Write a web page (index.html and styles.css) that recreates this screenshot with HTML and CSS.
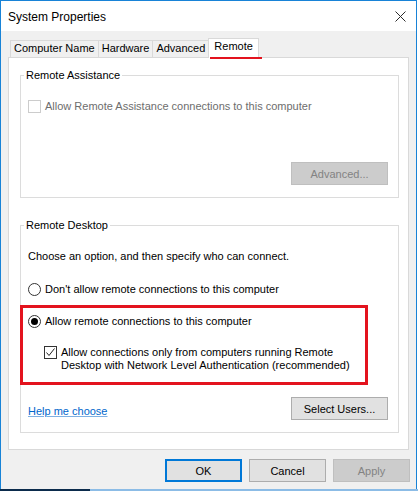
FILE: index.html
```html
<!DOCTYPE html>
<html>
<head>
	<title>System Properties</title>
	<meta charset="UTF-8">
	<link rel="stylesheet" href="styles.css">
</head>
<body>
	<div class="window">
		<div class="titlebar">
			<span class="title">System Properties</span>
			<svg class="close" width="11" height="11" viewBox="0 0 11 11">
				<path d="M0.5 0.5L10.5 10.5M10.5 0.5L0.5 10.5" stroke="#2b2b2b" stroke-width="1" fill="none"/>
			</svg>
		</div>
		<div class="client">
			<ul class="tabs">
				<li>Computer Name</li>
				<li>Hardware</li>
				<li>Advanced</li>
				<li class="active">Remote</li>
			</ul>
			<div class="panel">
				<div class="group assist">
					<div class="legend">Remote Assistance</div>
					<div class="check disabled">
						<span class="box"></span>
						<span>Allow Remote Assistance connections to this computer</span>
					</div>
					<div class="group-foot">
						<button class="btn btn-wide" disabled>Advanced...</button>
					</div>
				</div>
				<div class="group desktop">
					<div class="legend">Remote Desktop</div>
					<p class="hint">Choose an option, and then specify who can connect.</p>
					<div class="radio first">
						<span class="dot"></span>
						<span>Don't allow remote connections to this computer</span>
					</div>
					<div class="mark">
						<div class="radio on">
							<span class="dot"></span>
							<span>Allow remote connections to this computer</span>
						</div>
						<div class="check nla">
							<span class="box">
								<svg width="11" height="11" viewBox="0 0 11 11">
									<path d="M1.5 5.5L4 8.5L9.5 1.5" stroke="#222" stroke-width="1" fill="none"/>
								</svg>
							</span>
							<span>Allow connections only from computers running Remote<br>Desktop with Network Level Authentication (recommended)</span>
						</div>
					</div>
					<div class="group-foot split">
						<a class="help" href="#">Help me choose</a>
						<button class="btn btn-wide">Select Users...</button>
					</div>
				</div>
			</div>
			<div class="actions">
				<button class="btn default">OK</button>
				<button class="btn">Cancel</button>
				<button class="btn" disabled>Apply</button>
			</div>
		</div>
	</div>
	<div class="taskbar"></div>
</body>
</html>
```

FILE: styles.css
```css
*{
	margin: 0;
	padding: 0;
	box-sizing: border-box;
}
body{
	background: #fff;
	font-family: "Liberation Sans", Arial, sans-serif;
	font-size: 11px;
	line-height: 13px;
	color: #000;
}
ul{
	list-style: none;
}
.window{
	width: 417px;
	height: 489px;
	border: 1px solid #1883d7;
	border-bottom: none;
	display: flex;
	flex-direction: column;
}
.titlebar{
	height: 30px;
	background: #fff;
	display: flex;
	align-items: center;
	justify-content: space-between;
	padding: 0 10px 0 7px;
}
.title{
	font-size: 12px;
	line-height: 14px;
	padding-top: 2px;
}
.close{
	display: block;
	margin-top: 1px;
}
.client{
	flex: 1;
	background: #f0f0f0;
	padding-top: 7px;
}

/* tabs */
.tabs{
	display: flex;
	align-items: flex-end;
	padding-left: 9px;
}
.tabs li{
	height: 17px;
	line-height: 15px;
	padding: 0 3px;
	border: 1px solid #d9d9d9;
	border-bottom: none;
	background: #f0f0f0;
	margin-left: -1px;
}
.tabs li:first-child{
	margin-left: 0;
}
.tabs li.active{
	height: 20px;
	margin: 0 -2px -1px -1px;
	padding: 0 5px;
	background: #fff;
	position: relative;
	z-index: 1;
}
.tabs li.active:after{/* red underline under the current tab */
	content: "";
	position: absolute;
	left: 1px;
	bottom: -1px;
	width: 52px;
	height: 2px;
	background: #e3131e;
}
.panel{
	margin-left: 7px;
	width: 401px;
	background: #fff;
	border: 1px solid #d9d9d9;
	padding: 17px 9px 16px 11px;
}

/* group boxes */
.group{
	border: 1px solid #dcdcdc;
	padding: 0 0 12px 7px;
}
.legend{
	display: table;
	margin: -7px 0 0 -4px;
	padding: 0 2px;
	background: #fff;
}
.desktop{
	margin-top: 27px;
}
.group-foot{
	display: flex;
	justify-content: flex-end;
	padding-right: 10px;
}
.assist .group-foot{
	margin-top: 49px;
}
.group-foot.split{
	justify-content: space-between;
	align-items: flex-end;
	margin-top: 12px;
}
.help{
	color: #0066cc;
	text-decoration: underline;
	text-decoration-color: #7fb0e2;
	margin-bottom: 2px;
}

/* checkboxes and radios */
.check, .radio{
	display: flex;
	align-items: center;
	gap: 4px;
}
.box{
	width: 13px;
	height: 13px;
	border: 1px solid #333;
	background: #fff;
	display: flex;
	align-items: center;
	justify-content: center;
	flex-shrink: 0;
}
.box svg{
	display: block;
}
.assist .check{
	margin-top: 18px;
}
.check.disabled{
	color: #6d6d6d;
}
.check.disabled .box{
	border-color: #cccccc;
}
.dot{
	width: 13px;
	height: 13px;
	border: 1px solid #333;
	border-radius: 50%;
	display: flex;
	align-items: center;
	justify-content: center;
}
.radio.on .dot:after{
	content: "";
	width: 7px;
	height: 7px;
	border-radius: 50%;
	background: #000;
}
.hint{
	margin-top: 18px;
}
.radio.first{
	margin-top: 20px;
}
.mark{
	margin: 9px 0 0 -8px;
	width: 348px;
	border: 3px solid #e3131e;
	padding: 7px 0 10px 5px;
}
.check.nla{
	align-items: flex-start;
	margin: 18px 0 0 16px;
}

/* buttons */
.btn{
	height: 23px;
	width: 77px;
	font-family: inherit;
	font-size: 11px;
	color: #000;
	background: #e1e1e1;
	border: 1px solid #adadad;
}
.btn-wide{
	width: 97px;
}
.btn:disabled{
	background: #cccccc;
	border-color: #bfbfbf;
	color: #838383;
}
.btn.default{
	border: 2px solid #0078d7;
}
.actions{
	display: flex;
	justify-content: flex-end;
	gap: 7px;
	margin-top: 9px;
	padding-right: 6px;
}
.taskbar{
	height: 2px;
	background: linear-gradient(to right, #0b2b4c 90px, #8cbce6 90px);
}
```
